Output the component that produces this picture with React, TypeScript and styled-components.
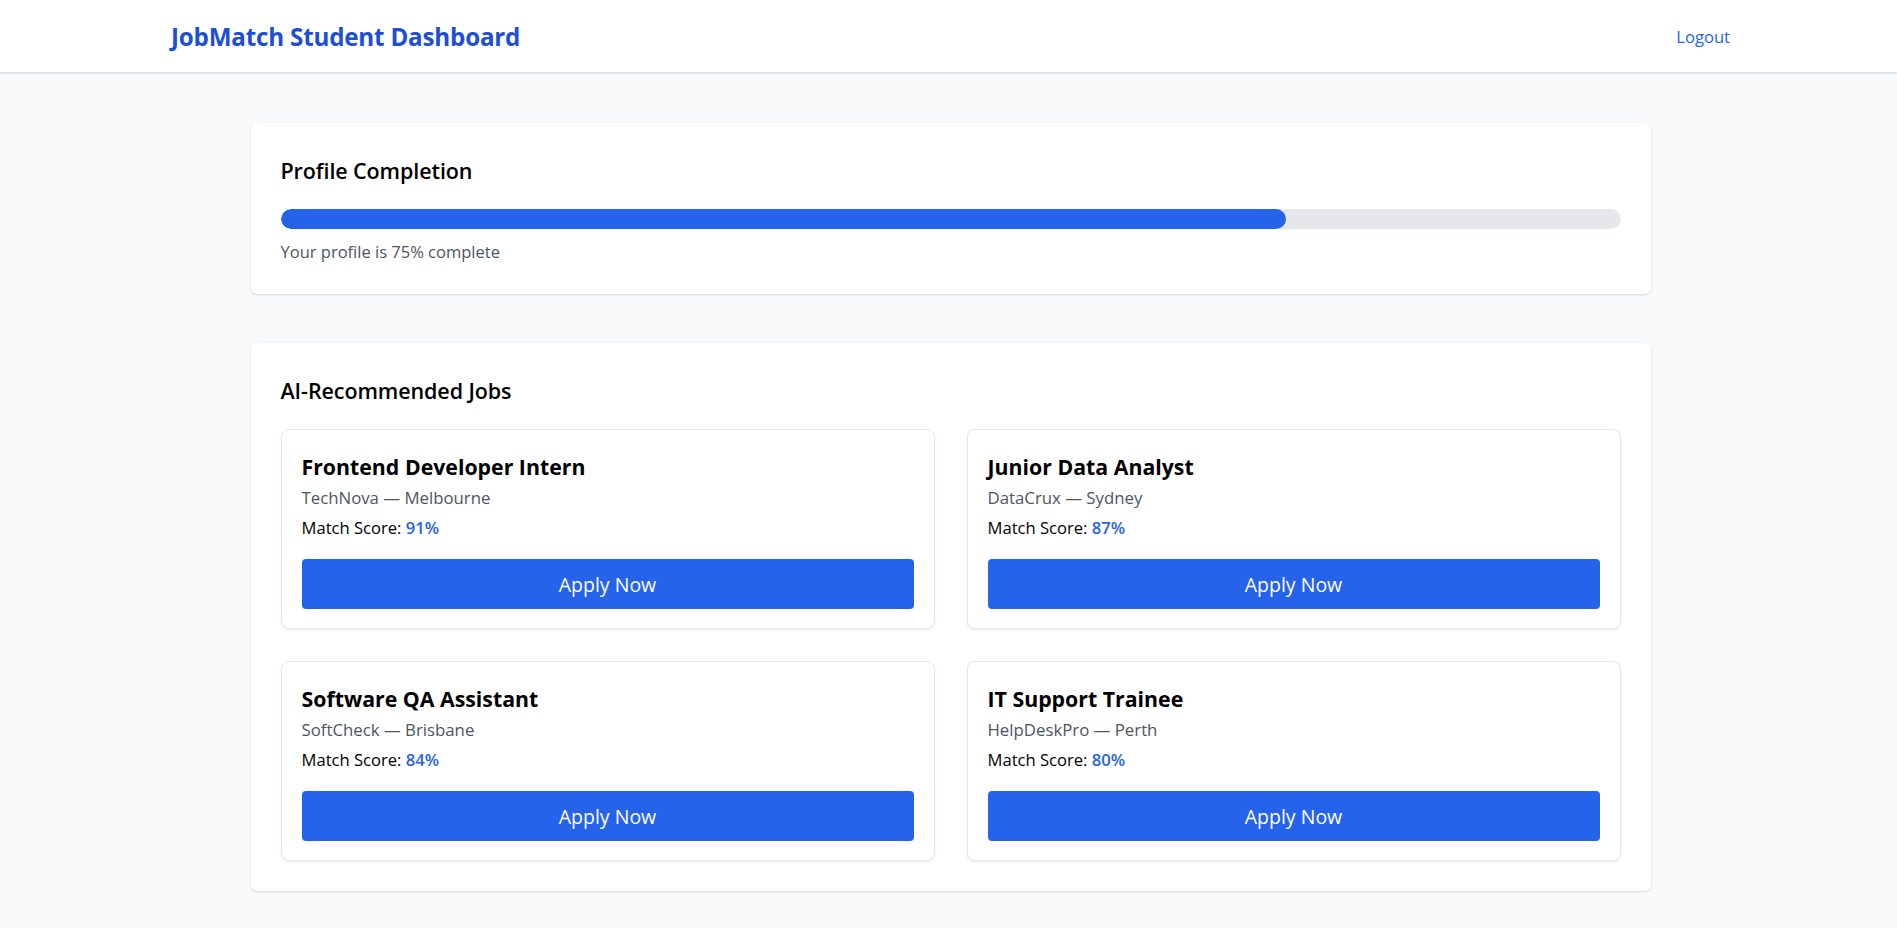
import React from "react";
import styled, { createGlobalStyle } from "styled-components";

const GlobalStyle = createGlobalStyle`
  * { box-sizing: border-box; }
  html, body { margin: 0; padding: 0; }
  body {
    background: #f9fafb;
    font-family: "Open Sans", "Noto Sans", Arial, sans-serif;
    color: #111827;
  }
`;

const Header = styled.header`
  height: 72px;
  background: #ffffff;
  box-shadow: 0 1px 3px rgba(0, 0, 0, 0.12), 0 1px 2px rgba(0, 0, 0, 0.06);
  display: flex;
  align-items: center;
  justify-content: space-between;
  padding: 0 167px 0 171px;
`;

const Brand = styled.h1`
  margin: 0;
  font-size: 24.2px;
  font-weight: 700;
  color: #1d4ed8;
  letter-spacing: -0.2px;
`;

const LogoutLink = styled.a`
  font-size: 16.6px;
  color: #2563eb;
  text-decoration: none;
  cursor: pointer;
`;

const Main = styled.main`
  width: 1404px;
  margin: 0 auto;
  padding: 51px 0 40px 4px;
  display: flex;
  flex-direction: column;
  gap: 49px;
`;

const Panel = styled.section`
  background: #ffffff;
  border-radius: 6px;
  box-shadow: 0 1px 3px rgba(0, 0, 0, 0.1), 0 1px 2px rgba(0, 0, 0, 0.06);
  padding: 30px;
`;

const PanelTitle = styled.h2`
  margin: 0 0 20px;
  font-size: 21.5px;
  line-height: 36px;
  font-weight: 600;
  color: #000000;
  letter-spacing: -0.1px;
`;

const Track = styled.div`
  height: 20px;
  border-radius: 10px;
  background: #e5e7eb;
  overflow: hidden;
`;

const Fill = styled.div`
  height: 100%;
  border-radius: 10px;
  background: #2563eb;
`;

const Caption = styled.p`
  margin: 11px 0 0;
  font-size: 16.5px;
  line-height: 24px;
  color: #4b5563;
`;

const JobGrid = styled.div`
  display: grid;
  grid-template-columns: 1fr 1fr;
  gap: 32px;
`;

const JobCard = styled.article`
  border: 1px solid #e5e7eb;
  border-radius: 8px;
  background: #ffffff;
  box-shadow: 0 1px 3px rgba(0, 0, 0, 0.08);
  padding: 22px 20px 19px;
  display: flex;
  flex-direction: column;
`;

const JobTitle = styled.h3`
  margin: 0;
  font-size: 21.3px;
  line-height: 30px;
  font-weight: 700;
  color: #000000;
`;

const Company = styled.p`
  margin: 4px 0 0;
  font-size: 16.8px;
  line-height: 24px;
  color: #4b5563;
`;

const MatchLine = styled.p`
  margin: 6px 0 0;
  font-size: 16.6px;
  line-height: 24px;
  color: #000000;
`;

const Score = styled.span`
  color: #2563eb;
  font-weight: 600;
`;

const ApplyButton = styled.button`
  margin-top: 19px;
  height: 50px;
  width: 100%;
  border: none;
  border-radius: 4px;
  background: #2563eb;
  color: #ffffff;
  font-family: inherit;
  font-size: 19.5px;
  cursor: pointer;
`;

const jobs = [
  { title: "Frontend Developer Intern", company: "TechNova", city: "Melbourne", score: 91 },
  { title: "Junior Data Analyst", company: "DataCrux", city: "Sydney", score: 87 },
  { title: "Software QA Assistant", company: "SoftCheck", city: "Brisbane", score: 84 },
  { title: "IT Support Trainee", company: "HelpDeskPro", city: "Perth", score: 80 },
];

export default function App() {
  const completion = 75;
  return (
    <>
      <GlobalStyle />
      <Header>
        <Brand>JobMatch Student Dashboard</Brand>
        <LogoutLink>Logout</LogoutLink>
      </Header>
      <Main>
        <Panel>
          <PanelTitle>Profile Completion</PanelTitle>
          <Track>
            <Fill style={{ width: `${completion}%` }} />
          </Track>
          <Caption>Your profile is {completion}% complete</Caption>
        </Panel>
        <Panel>
          <PanelTitle>AI-Recommended Jobs</PanelTitle>
          <JobGrid>
            {jobs.map((job) => (
              <JobCard key={job.title}>
                <JobTitle>{job.title}</JobTitle>
                <Company>
                  {job.company} — {job.city}
                </Company>
                <MatchLine>
                  Match Score: <Score>{job.score}%</Score>
                </MatchLine>
                <ApplyButton>Apply Now</ApplyButton>
              </JobCard>
            ))}
          </JobGrid>
        </Panel>
      </Main>
    </>
  );
}
